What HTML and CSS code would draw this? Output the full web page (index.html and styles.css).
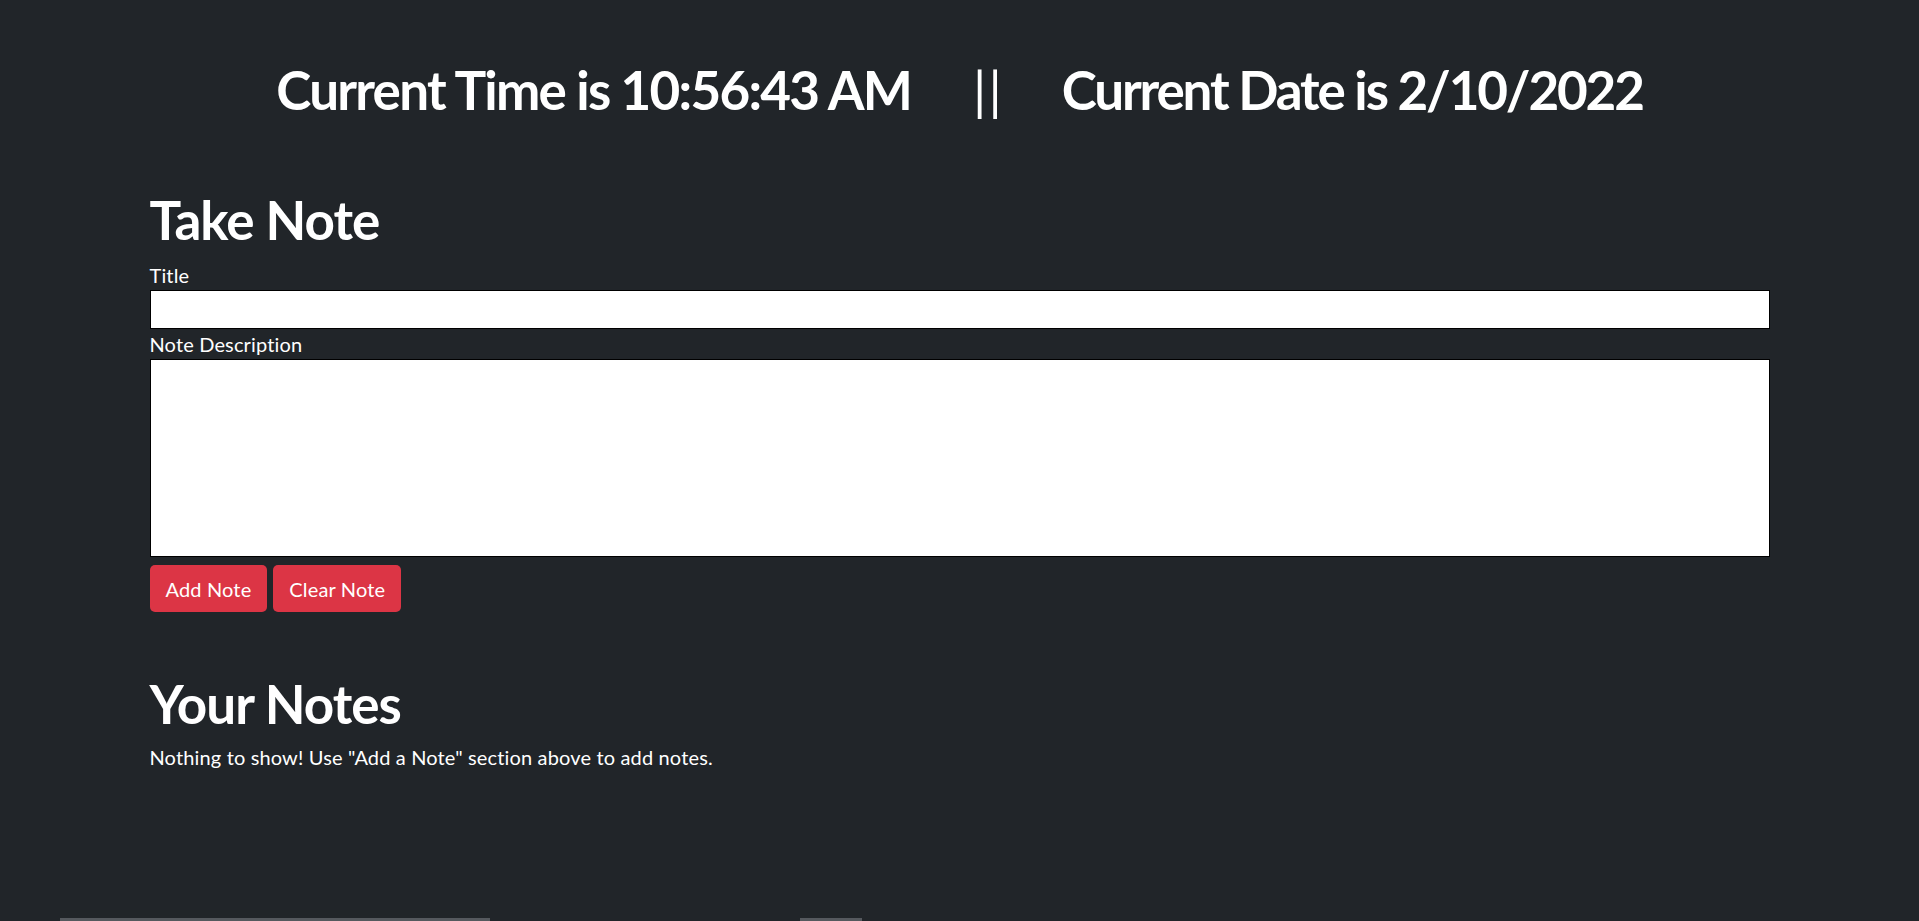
FILE: index.html
```html
<!DOCTYPE html>
<html lang="en">
<head>
<meta charset="utf-8">
<title>Notes</title>
<link rel="stylesheet" href="styles.css">
</head>
<body>
<header class="clock">
  <h1 class="clock-line"><span>Current Time is 10:56:43 AM</span><span class="sep">||</span><span class="date">Current Date is 2/10/2022</span></h1>
</header>
<main class="container">
  <section class="take">
    <h1 class="heading">Take Note</h1>
    <label class="label" for="title">Title</label>
    <input class="field" id="title" type="text">
    <label class="label" for="desc">Note Description</label>
    <textarea class="field area" id="desc"></textarea>
    <div class="actions">
      <button class="btn">Add Note</button>
      <button class="btn">Clear Note</button>
    </div>
  </section>
  <section class="notes">
    <h1 class="heading">Your Notes</h1>
    <p class="empty">Nothing to show! Use "Add a Note" section above to add notes.</p>
  </section>
</main>
<div class="peek">
  <div class="peek-a"></div>
  <div class="peek-b"></div>
</div>
</body>
</html>
```
FILE: styles.css
```css
html, body {
  margin: 0;
  padding: 0;
  background: #212529;
  color: #fff;
  font-family: Lato, "Open Sans", sans-serif;
  overflow: hidden;
}
body {
  padding-top: 58px;
}
.clock {
  display: flex;
  justify-content: center;
}
.clock-line {
  margin: 0;
  font-size: 53px;
  line-height: 64px;
  font-weight: 700;
  letter-spacing: -1.75px;
  display: flex;
}
.sep {
  font-weight: 400;
  letter-spacing: 2px;
  margin: 0 58px 0 62px;
}
.date {
  letter-spacing: -2.15px;
}
.container {
  width: 1620px;
  margin: 66px auto 0;
}
.heading {
  margin: 0;
  font-size: 53px;
  line-height: 64px;
  font-weight: 700;
  letter-spacing: -1px;
}
.label {
  display: block;
  margin-top: 8px;
  font-size: 20px;
  line-height: 30px;
  letter-spacing: 0.15px;
}
.heading + .label {
  margin-top: 8px;
}
.field + .label {
  margin-top: 0;
}
.field {
  display: block;
  box-sizing: border-box;
  width: 100%;
  height: 39px;
  margin: 0;
  border: 1px solid #000;
  background: #fff;
  font: inherit;
  padding: 0 4px;
}
.area {
  height: 198px;
  resize: none;
}
.actions {
  display: flex;
  gap: 6px;
  margin-top: 8px;
}
.btn {
  height: 47px;
  padding: 0 16px;
  border: 0;
  border-radius: 5px;
  background: #dc3545;
  color: #fff;
  font-family: inherit;
  font-size: 20px;
  letter-spacing: 0.15px;
}
.notes {
  margin-top: 60px;
}
.empty {
  margin: 6px 0 0;
  font-size: 20px;
  line-height: 30px;
  letter-spacing: 0.15px;
}
.peek {
  display: flex;
  margin-top: 146px;
  padding-left: 60px;
}
.peek-a {
  width: 430px;
  height: 3px;
  background: #55595e;
}
.peek-b {
  width: 62px;
  height: 3px;
  margin-left: 310px;
  background: #55595e;
}
```
